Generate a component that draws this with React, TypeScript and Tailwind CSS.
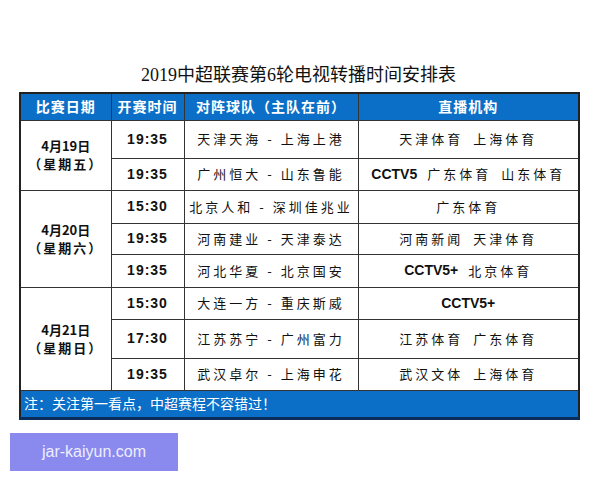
import React from 'react';

const cjk = { fontFamily: '"Noto Sans CJK SC", "Noto Sans", sans-serif' };
const serif = { fontFamily: '"Liberation Serif", "Noto Sans CJK SC", serif' };
const latin = { fontFamily: '"Liberation Sans", "Noto Sans CJK SC", sans-serif' };

type Match = { time: string; teams: string; tv: string[]; h: string };
type Day = { date: string; week: string; matches: Match[] };

const days: Day[] = [
  {
    date: '4月19日',
    week: '（星期五）',
    matches: [
      { time: '19:35', teams: '天津天海 - 上海上港', tv: ['天津体育', '上海体育'], h: 'h-[38px]' },
      { time: '19:35', teams: '广州恒大 - 山东鲁能', tv: ['CCTV5', '广东体育', '山东体育'], h: 'h-[32px]' },
    ],
  },
  {
    date: '4月20日',
    week: '（星期六）',
    matches: [
      { time: '15:30', teams: '北京人和 - 深圳佳兆业', tv: ['广东体育'], h: 'h-[33px]' },
      { time: '19:35', teams: '河南建业 - 天津泰达', tv: ['河南新闻', '天津体育'], h: 'h-[31px]' },
      { time: '19:35', teams: '河北华夏 - 北京国安', tv: ['CCTV5+', '北京体育'], h: 'h-[33px]' },
    ],
  },
  {
    date: '4月21日',
    week: '（星期日）',
    matches: [
      { time: '15:30', teams: '大连一方 - 重庆斯威', tv: ['CCTV5+'], h: 'h-[32px]' },
      { time: '17:30', teams: '江苏苏宁 - 广州富力', tv: ['江苏体育', '广东体育'], h: 'h-[39px]' },
      { time: '19:35', teams: '武汉卓尔 - 上海申花', tv: ['武汉文体', '上海体育'], h: 'h-[32px]' },
    ],
  },
];

// latin channel names are not letter-spaced in the picture
function Channel({ name }: { name: string }) {
  if (name.startsWith('CCTV')) {
    return <span className="font-bold text-[14px] tracking-normal" style={latin}>{name}</span>;
  }
  return <span className="tracking-[3px]" style={cjk}>{name}</span>;
}

export default function App() {
  return (
    <div className="w-[600px] h-[480px] bg-white overflow-hidden">
      <div className="pt-[65px] pl-[19px]">
        <div className="w-[559px] text-center text-[18px] leading-[20px] text-[#111] mb-[7px]" style={serif}>
          2019中超联赛第6轮电视转播时间安排表
        </div>
        <table className="w-[559px] border-collapse table-fixed border-2 border-[#222]">
          <colgroup>
            <col className="w-[91px]" />
            <col className="w-[73px]" />
            <col className="w-[174px]" />
            <col className="w-[221px]" />
          </colgroup>
          <thead>
            <tr className="h-[27px] bg-[#0b6fc7] text-white text-[14px] font-bold" style={cjk}>
              <th className="border border-[#333] font-bold tracking-[1px]">比赛日期</th>
              <th className="border border-[#333] font-bold tracking-[1px]">开赛时间</th>
              <th className="border border-[#333] font-bold tracking-[1px]">对阵球队（主队在前）</th>
              <th className="border border-[#333] font-bold tracking-[1px]">直播机构</th>
            </tr>
          </thead>
          <tbody>
            {days.map((d) =>
              d.matches.map((m, i) => (
                <tr key={d.date + i} className={m.h}>
                  {i === 0 && (
                    <td
                      rowSpan={d.matches.length}
                      className="border border-[#333] text-center text-[13px] leading-[18px] font-bold text-[#111]"
                      style={cjk}
                    >
                      <div>{d.date}</div>
                      <div className="tracking-[2px]">{d.week}</div>
                    </td>
                  )}
                  <td className="border border-[#333] text-center text-[14px] font-bold text-[#111] tracking-[1px]" style={latin}>
                    {m.time}
                  </td>
                  <td className="border border-[#333] text-center text-[13px] text-[#111] tracking-[3px] whitespace-nowrap" style={cjk}>
                    {m.teams}
                  </td>
                  <td className="border border-[#333] text-[13px] text-[#111]">
                    <div className="flex justify-center items-center gap-[10px] whitespace-nowrap">
                      {m.tv.map((c) => (
                        <Channel key={c} name={c} />
                      ))}
                    </div>
                  </td>
                </tr>
              ))
            )}
            <tr className="h-[28px] bg-[#0b6fc7]">
              <td colSpan={4} className="border border-[#333] border-b-[3px] border-b-[#0a2d5c] pl-[3px] text-[14px] text-white" style={cjk}>
                注：关注第一看点，中超赛程不容错过！
              </td>
            </tr>
          </tbody>
        </table>
      </div>
      <div className="ml-[10px] mt-[13px] w-[168px] h-[38px] bg-[#8989ee] flex items-center justify-center text-[16px] text-[#eeeeff]" style={latin}>
        jar-kaiyun.com
      </div>
    </div>
  );
}
